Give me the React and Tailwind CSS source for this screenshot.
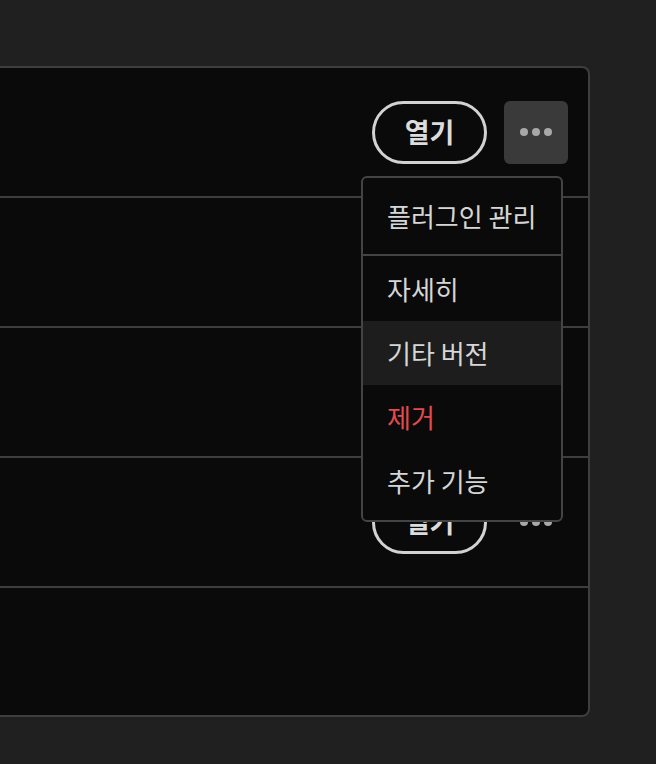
import { useState } from "react";

const rows = [1, 2, 3, 4];

const menuItems = [
  { label: "자세히" },
  { label: "기타 버전", active: true },
  { label: "제거", danger: true },
  { label: "추가 기능" },
];

function Dots() {
  return (
    <span className="flex items-center gap-[4px]">
      <span className="w-[8px] h-[8px] rounded-full bg-[#a8a8a8]" />
      <span className="w-[8px] h-[8px] rounded-full bg-[#a8a8a8]" />
      <span className="w-[8px] h-[8px] rounded-full bg-[#a8a8a8]" />
    </span>
  );
}

function Menu() {
  return (
    <div className="absolute right-[5px] top-[75px] w-[202px] z-10 bg-[#0a0a0a] border-2 border-[#444444] rounded-[6px]">
      <div className="py-[6px]">
        <div className="h-16 flex items-center px-6 text-[26px] text-[#d6d6d6]">플러그인 관리</div>
      </div>
      <div className="border-t-2 border-[#444444] pt-[1px] pb-[7px]">
        {menuItems.map((m) => (
          <div
            key={m.label}
            className={`h-16 flex items-center px-6 text-[26px] ${
              m.active ? "bg-[#1d1d1d]" : ""
            } ${m.danger ? "text-[#e24a4f]" : "text-[#d6d6d6]"}`}
          >
            {m.label}
          </div>
        ))}
      </div>
    </div>
  );
}

export default function App() {
  const [open] = useState(true);

  return (
    <div
      className="h-[764px] bg-[#202020] pt-[66px] overflow-hidden"
      style={{ fontFamily: '"Noto Sans CJK KR", "Noto Sans", sans-serif' }}
    >
      <div className="w-[590px] bg-[#0a0a0a] border-y-2 border-r-2 border-[#3e3e3e] rounded-r-[8px]">
        {rows.map((r, i) => (
          <div key={r} className="h-[130px] border-b-2 border-[#3e3e3e] flex items-center justify-end pr-5">
            <div className="relative flex items-center gap-[17px]">
              <button className="w-[115px] h-[63px] rounded-full border-[3px] border-[#d2d2d2] text-[27px] font-bold text-[#dcdcdc] flex items-center justify-center">
                열기
              </button>
              <button
                className={`w-[64px] h-[63px] rounded-[6px] flex items-center justify-center ${
                  i === 0 ? "bg-[#3a3a3a]" : ""
                }`}
              >
                <Dots />
              </button>
              {i === 0 && open && <Menu />}
            </div>
          </div>
        ))}
        <div className="h-[127px]" />
      </div>
    </div>
  );
}
